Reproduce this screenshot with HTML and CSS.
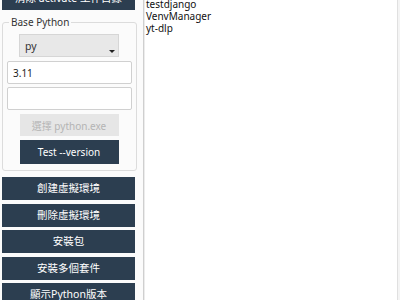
FILE: index.html
```html
<!DOCTYPE html>
<html lang="zh-Hant">

<head>
    <meta charset="UTF-8">
    <meta name="viewport" content="width=device-width, initial-scale=1.0">
    <title>VenvManager</title>
    <link rel="stylesheet" href="styles.css">
</head>

<body>
    <div class="app">
        <div class="side">
            <button class="btn btn-top">清除 activate 工作目錄</button>
            <fieldset class="group">
                <legend>Base Python</legend>
                <div class="combo">
                    <span>py</span>
                    <span class="arrow"></span>
                </div>
                <input class="field" type="text" value="3.11">
                <input class="field" type="text" value="">
                <button class="btn-small disabled">選擇 python.exe</button>
                <button class="btn-small dark">Test --version</button>
            </fieldset>
            <div class="actions">
                <button class="btn">創建虛擬環境</button>
                <button class="btn">刪除虛擬環境</button>
                <button class="btn">安裝包</button>
                <button class="btn">安裝多個套件</button>
                <button class="btn">顯示Python版本</button>
            </div>
        </div>
        <div class="list">
            <ul>
                <li>testdjango</li>
                <li>VenvManager</li>
                <li>yt-dlp</li>
            </ul>
        </div>
        <div class="edge"></div>
    </div>
</body>

</html>
```

FILE: styles.css
```css
* {
    margin: 0;
    padding: 0;
    box-sizing: border-box;
}

body {
    width: 400px;
    height: 300px;
    overflow: hidden;
    background: #fbfbfb;
    font-family: "Noto Sans", "Noto Sans CJK TC", sans-serif;
    font-size: 10.5px;
    color: #333;
}

li {
    list-style: none;
}

.app {
    display: flex;
    height: 300px;
}

.side {
    width: 143px;
    padding: 0 7px 0 2px;
    margin-top: -13px;
    display: flex;
    flex-direction: column;
}

.btn {
    display: block;
    flex-shrink: 0;
    width: 133px;
    height: 23px;
    border: none;
    background-color: #2c3e50;
    color: #fff;
    font-family: inherit;
    font-size: 10.5px;
    line-height: 23px;
    text-align: center;
}

.group {
    margin-top: 5px;
    width: 134px;
    border: 1px solid #dcdcdc;
    border-radius: 3px;
    padding: 5px 4px 6px 3px;
    display: flex;
    flex-direction: column;
    align-items: center;
}

.group legend {
    margin-left: 3px;
    padding: 0 2px;
    font-size: 10px;
    line-height: 14px;
    color: #333;
}

.combo {
    width: 100px;
    height: 23px;
    background: #e8e8e8;
    border: 1px solid #d6d6d6;
    display: flex;
    align-items: center;
    justify-content: space-between;
    padding: 0 3px 0 5px;
    font-size: 10.5px;
}

.arrow {
    width: 0;
    height: 0;
    border-left: 3px solid transparent;
    border-right: 3px solid transparent;
    border-top: 3px solid #222;
    margin-top: 11px;
}

.field {
    width: 125px;
    height: 23px;
    margin-top: 4px;
    border: 1px solid #d0d0d0;
    border-radius: 2px;
    background: #fff;
    padding: 0 5px;
    font-family: inherit;
    font-size: 10px;
    color: #222;
    align-self: flex-start;
    margin-left: 1px;
}

.field + .field {
    margin-top: 3px;
}

.btn-small {
    width: 99px;
    border: none;
    font-family: inherit;
    font-size: 10px;
    text-align: center;
}

.disabled {
    height: 22px;
    margin-top: 4px;
    background: #e6e6e6;
    color: #b4b4b4;
}

.dark {
    height: 24px;
    margin-top: 4px;
    background: #2c3e50;
    color: #fff;
}

.actions {
    margin-top: 6px;
    display: flex;
    flex-direction: column;
    gap: 3.5px;
}

.list {
    width: 254px;
    height: 300px;
    background: #fff;
    border-left: 1px solid #cfcfcf;
    box-shadow: inset 1px 0 0 #ececec;
    padding-left: 2px;
}

.list ul {
    margin-top: -2px;
}

.list li {
    font-size: 10px;
    line-height: 12px;
    color: #111;
}

.edge {
    flex: 1;
    border-left: 1px solid #e0e0e0;
    background: #f4f4f4;
}
```
